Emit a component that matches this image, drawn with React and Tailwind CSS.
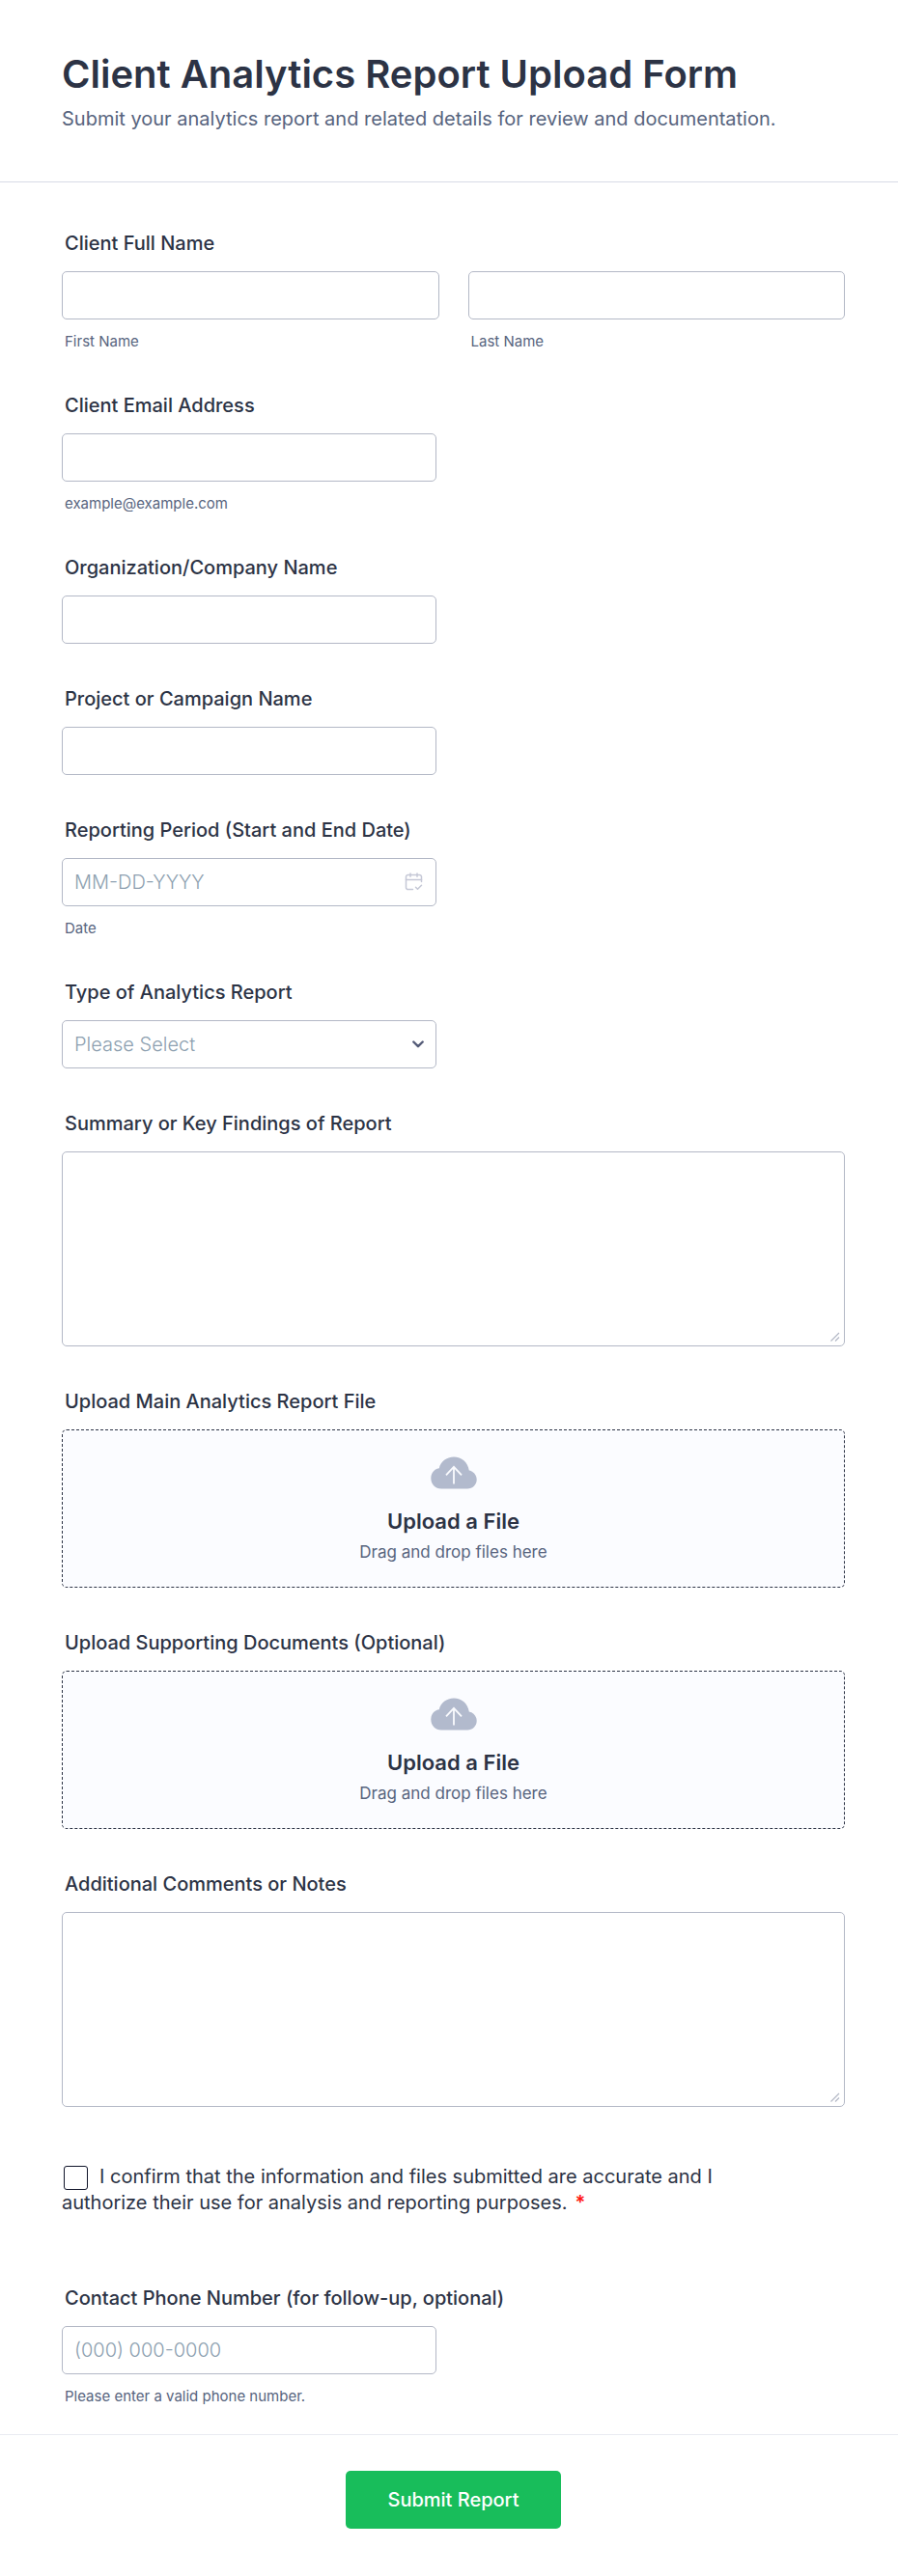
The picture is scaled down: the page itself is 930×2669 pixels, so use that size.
import React from "react";

const boxClass =
  "block w-full rounded-[5px] border border-[#b3b8c6] bg-white px-3 text-[20px] font-light text-[#2c3345] placeholder:text-[#8d9fb0] placeholder:opacity-100 outline-none focus:border-[#2e69ff]";

const labelClass = "mb-[17px] block px-[3px] text-[20px] leading-6 font-medium text-[#2c3345]";

function Hint({ htmlFor, children }) {
  return (
    <label htmlFor={htmlFor} className="mt-[14px] block px-[3px] text-[15px] leading-[18px] font-normal text-[#57647e]">
      {children}
    </label>
  );
}

function Field({ id, label, hint, wide, children }) {
  return (
    <div>
      <label htmlFor={id} className={labelClass}>
        {label}
      </label>
      <div className={wide ? "w-full" : "w-full max-w-[388px]"}>
        {children}
        {hint && <Hint htmlFor={id}>{hint}</Hint>}
      </div>
    </div>
  );
}

function CalendarIcon() {
  return (
    <svg viewBox="0 0 18 19" className="size-[19px]" fill="none" stroke="#c5c8d6" strokeWidth="1.5" strokeLinecap="round" strokeLinejoin="round" aria-hidden="true">
      <path d="M8 17.6H3.2A2.2 2.2 0 0 1 1 15.4V4.6A2.2 2.2 0 0 1 3.2 2.4H14.8A2.2 2.2 0 0 1 17 4.6V9.5" />
      <path d="M1 7.5H17M5.5 0.9V4.3M12.5 0.9V4.3M11 15.2L13 17.2L17 13.2" />
    </svg>
  );
}

function CloudUploadIcon() {
  return (
    <svg viewBox="0 0 48 34" className="h-[34px] w-12" aria-hidden="true">
      <path
        d="M11 33.5C5 33.5 0.3 29 0.3 22.5C0.3 17 4 13 8.8 12.3C10.3 5.5 16.5 0.5 24 0.5C32 0.5 38.5 6 39.8 14.6C44.5 15.5 47.7 19.3 47.7 24C47.7 29.3 43.5 33.5 38 33.5Z"
        fill="#b2bacd"
      />
      <path d="M24 28.5V11M16 19.3L24 10.8L32 19.3" fill="none" stroke="#fafbfe" strokeWidth="1.8" />
    </svg>
  );
}

function TextAreaField({ id, label }) {
  return (
    <Field id={id} label={label} wide>
      <div className="relative">
        <textarea id={id} className={`${boxClass} h-[202px] resize-none py-3`} />
        <svg viewBox="0 0 10 10" className="pointer-events-none absolute right-[5px] bottom-[5px] size-[10px]" fill="none" stroke="#b3b8c6" strokeWidth="1.2" aria-hidden="true">
          <path d="M0.5 9.5L9 1M5 9.5L9 5.5" />
        </svg>
      </div>
    </Field>
  );
}

function UploadField({ id, label }) {
  return (
    <Field id={id} label={label} wide>
      <label
        htmlFor={id}
        className="flex h-[164px] cursor-pointer flex-col items-center rounded-[5px] border border-dashed border-[#2c3345] bg-[#fbfcff] pt-[27px]"
      >
        <CloudUploadIcon />
        <span className="mt-[19px] text-[22px] leading-7 font-semibold text-[#2c3345]">Upload a File</span>
        <span className="mt-[6px] text-[17px] leading-6 text-[#57647e]">Drag and drop files here</span>
        <input id={id} type="file" className="sr-only" />
      </label>
    </Field>
  );
}

export default function App() {
  return (
    <form
      className="min-h-screen bg-white font-['Inter',sans-serif] text-[#2c3345]"
      onSubmit={(e) => e.preventDefault()}
    >
      <header className="border-b border-[#d7dbe6] px-16 py-[53px]">
        <h1 className="text-[40px] leading-[48px] font-semibold">Client Analytics Report Upload Form</h1>
        <p className="mt-[10px] text-[20px] leading-6 font-normal text-[#57647e]">
          Submit your analytics report and related details for review and documentation.
        </p>
      </header>

      <div className="flex flex-col gap-[45px] pt-[51px] pr-[55px] pb-[30px] pl-16">
        <fieldset>
          <legend className={labelClass}>Client Full Name</legend>
          <div className="grid grid-cols-2 gap-[30px]">
            <div>
              <input id="first-name" className={`${boxClass} h-[50px]`} />
              <Hint htmlFor="first-name">First Name</Hint>
            </div>
            <div>
              <input id="last-name" className={`${boxClass} h-[50px]`} />
              <Hint htmlFor="last-name">Last Name</Hint>
            </div>
          </div>
        </fieldset>

        <Field id="email" label="Client Email Address" hint="example@example.com">
          <input id="email" type="email" className={`${boxClass} h-[50px]`} />
        </Field>

        <Field id="company" label="Organization/Company Name">
          <input id="company" className={`${boxClass} h-[50px]`} />
        </Field>

        <Field id="project" label="Project or Campaign Name">
          <input id="project" className={`${boxClass} h-[50px]`} />
        </Field>

        <Field id="period" label="Reporting Period (Start and End Date)" hint="Date">
          <div className="relative">
            <input id="period" placeholder="MM-DD-YYYY" className={`${boxClass} h-[50px] pr-12`} />
            <button type="button" aria-label="Choose date" className="absolute top-[15px] right-[14px]">
              <CalendarIcon />
            </button>
          </div>
        </Field>

        <Field id="type" label="Type of Analytics Report">
          <div className="relative">
            <select id="type" defaultValue="" className={`${boxClass} h-[50px] appearance-none text-[#8d9fb0]`}>
              <option value="">Please Select</option>
            </select>
            <svg viewBox="0 0 12 8" className="pointer-events-none absolute top-[21px] right-[13px] h-2 w-3" fill="none" stroke="#555c78" strokeWidth="2.4" strokeLinecap="round" strokeLinejoin="round" aria-hidden="true">
              <path d="M1.3 1.5L6 6.2L10.7 1.5" />
            </svg>
          </div>
        </Field>

        <TextAreaField id="summary" label="Summary or Key Findings of Report" />

        <UploadField id="main-file" label="Upload Main Analytics Report File" />
        <UploadField id="supporting-files" label="Upload Supporting Documents (Optional)" />

        <TextAreaField id="comments" label="Additional Comments or Notes" />

        <div className="mt-[14px] mb-7 max-w-[700px] text-[20px] leading-[27px]">
          <input
            id="confirm"
            type="checkbox"
            required
            className="mr-3 ml-[2px] inline-block size-[25px] appearance-none rounded-[3px] border border-[#11152a] bg-white align-middle checked:bg-[#2e69ff]"
          />
          <label htmlFor="confirm">
            I confirm that the information and files submitted are accurate and I authorize their use for analysis and
            reporting purposes.
          </label>
          <span className="ml-2 font-semibold text-[#ff1410]">*</span>
        </div>

        <Field id="phone" label="Contact Phone Number (for follow-up, optional)" hint="Please enter a valid phone number.">
          <input id="phone" type="tel" placeholder="(000) 000-0000" className={`${boxClass} h-[50px]`} />
        </Field>
      </div>

      <footer className="flex justify-center border-t border-[#eaebf2] pt-[37px] pr-[55px] pb-12 pl-16">
        <button type="submit" className="h-[60px] rounded-[5px] bg-[#18bd5b] px-[43px] text-[20px] font-medium text-white">
          Submit Report
        </button>
      </footer>
    </form>
  );
}
